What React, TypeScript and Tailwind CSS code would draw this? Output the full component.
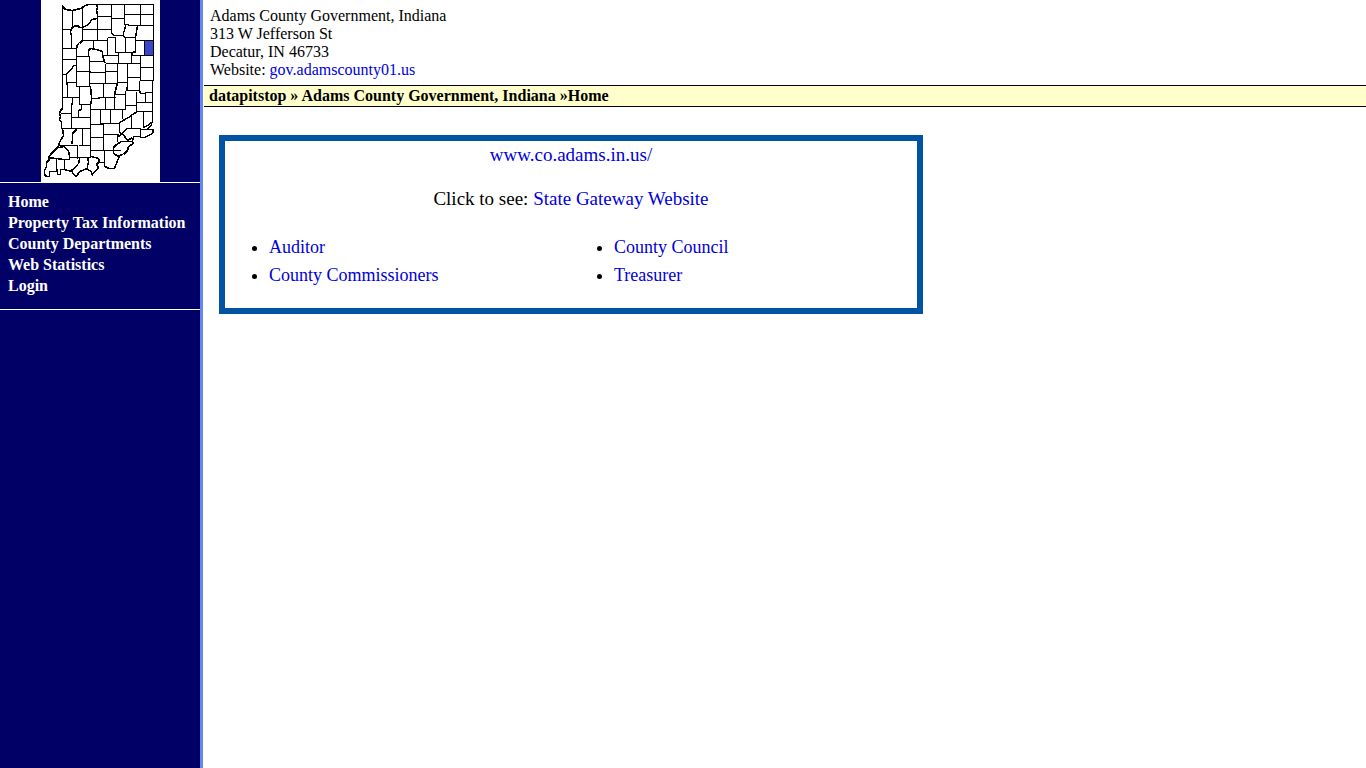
const menu = [
    { text: "Home", href: "#home" },
    { text: "Property Tax Information", href: "#tax" },
    { text: "County Departments", href: "#departments" },
    { text: "Web Statistics", href: "#statistics" },
    { text: "Login", href: "#login" },
]

const departments = [
    ["Auditor", "County Commissioners"],
    ["County Council", "Treasurer"],
]

// county lines, one entry per stretch of border
const countyLines = [
    // north
    "M22 60V6L25 9L32 10L40 8L45 5L48 4H113",
    "M32 10V25M42 6V27M56 4L57 7L56 10L57 14V16H71",
    "M57 16V18L51 19L49 23L46 25L42 27H39L37 25L33 26L31 28L30 31L31 36V48",
    "M22 29H30M42 29H71M57 16V40M42 27V40H67M42 40L39 43L37 44L36 48V60M22 48H36M53 40V48",
    "M36 56H49V61M48 56V50L50 48L56 49L62 51V55L64 61L65 63M49 61H64M22 59H36",
    "M113 4V80M84 4V24M71 4V33L74 35H83M100 4V25M84 14H113M71 18H84M84 24H88V25H113",
    "M85 25L84 30L83 32V36L85 37H95M97 25L96 31L95 37V51L92 52V55",
    "M67 37H75M67 37V55M75 36V52H95M85 37V52M95 40H113M91 55H113M78 52V63M91 52V63M100 55V80",
    "M62 55H78M104 40V55",
    // middle
    "M22 60V108L20 110L19 113L20 116L19 119L21 122V128H22",
    "M36 60V86M36 71H50M36 65H33L31 69L26 73V82L27 85V97M22 74H26M26 82H36",
    "M49 61V86M36 86H50M39 86V104M50 86L51 97V100L50 104V109M22 97H39M32 97V103L31 104V128",
    "M38 104H50M41 104V109L38 110V117M31 117H50M49 72H65M49 83H77M51 98H58L59 97H75M50 109H85M20 113H31",
    "M65 63H100M65 63V83M65 71H77M77 63V83L76 86L75 90L74 94V109M87 63V86L86 90V90H99",
    "M100 67H113M87 77H100M99 80H113M77 82H87M63 83V97M74 94H85M99 80V90L100 93H105V92H112",
    "M112 80V122M96 91V111M105 93V102M96 102H112M85 90V109M85 105H96M65 97V109M70 109V123M60 109V123",
    "M82 109V118M79 132V122L88 117L92 114L97 111H112M91 115V127M103 111V126",
    // south
    "M22 128H50M50 109V156M50 124H63V150M50 137H62M50 150H80M60 123H79M63 134H78",
    "M22 128L23 135L19 142L18 146L14 150L10 154L8 157L9 159L6 162V166L4 170V174L6 176H9V171H16L17 169V174H20V169H24",
    "M36 129L32 133V140L31 144M36 128V129M42 128V145M19 145H37M38 145H50M37 144V158M29 157H50",
    "M18 147L24 146L28 151L29 155V159H24V169L31 171M8 157L15 158L24 159M16 158V170",
    "M39 158L38 164L31 170L33 174L36 176L39 171L47 168",
    "M47 158L48 161L47 166V169L51 171V173L52 174L54 171L58 168L56 163L59 162L58 158L51 156L47 158M58 162H64",
    "M73 150V147L76 144L81 141H91",
    "M64 150V166L69 168H74L76 163L79 155M73 150V153L78 156M100 136H93L92 141L93 143L88 146L87 150L83 154L78 155",
    "M79 132L81 133L87 128H100M78 134L77 137V141M78 136L82 133L87 140L92 137",
    "M100 128V137H104L112 133L113 129H100M103 127L107 125L111 122V125L107 128",
]

function CountyMap() {
    return (
        <svg
            viewBox="1 0 119 182"
            className="block h-[182px] w-[119px] bg-white"
            shapeRendering="crispEdges"
            role="img"
            aria-label="Indiana county map"
        >
            <g transform="translate(0.5 0.5)" fill="none" stroke="#000" strokeWidth="1.5">
                <rect x="104" y="40" width="9" height="15" fill="#3b44cc" />
                {countyLines.map((d, i) => (
                    <path key={i} d={d} />
                ))}
            </g>
        </svg>
    )
}

export default function App() {
    return (
        <div className="flex min-h-screen bg-white font-['Liberation_Serif',serif] text-black">
            <aside className="w-[203px] shrink-0 border-r-3 border-[#6688ee] bg-[#000066]">
                <div className="flex justify-center border-b border-white">
                    <CountyMap />
                </div>
                <nav className="border-b border-white px-2 pt-2 pb-[13px]">
                    {menu.map((item) => (
                        <a
                            key={item.text}
                            href={item.href}
                            className="block text-base leading-[21px] font-bold whitespace-nowrap text-white"
                        >
                            {item.text}
                        </a>
                    ))}
                </nav>
            </aside>

            <div className="min-w-0 flex-1 pl-px">
                <address className="px-1.5 pt-[7px] pb-1.5 text-base leading-[18px] not-italic">
                    <p>Adams County Government, Indiana</p>
                    <p>313 W Jefferson St</p>
                    <p>Decatur, IN 46733</p>
                    <p>
                        Website: <a href="#site" className="text-[#0000dd]">gov.adamscounty01.us</a>
                    </p>
                </address>

                <div className="border-y border-black bg-[#ffffcc] px-[5px] text-base leading-5 font-bold">
                    datapitstop » Adams County Government, Indiana »Home
                </div>

                <main className="px-[15px] pt-7">
                    <div className="w-full max-w-[704px] border-6 border-[#0054a3] px-px pt-[3px] pb-[19px]">
                        <div className="text-center text-[19px] leading-[22px]">
                            <p>
                                <a href="#county" className="text-[#0000dd]">www.co.adams.in.us/</a>
                            </p>
                            <p className="mt-[22px]">
                                Click to see: <a href="#gateway" className="text-[#0000dd]">State Gateway Website</a>
                            </p>
                        </div>
                        <div className="mt-[23px] grid grid-cols-2 text-lg leading-7">
                            {departments.map((column, i) => (
                                <ul key={i} className="list-disc pl-[43px]">
                                    {column.map((name) => (
                                        <li key={name}>
                                            <a href="#department" className="text-[#0000dd]">{name}</a>
                                        </li>
                                    ))}
                                </ul>
                            ))}
                        </div>
                    </div>
                </main>
            </div>
        </div>
    )
}
